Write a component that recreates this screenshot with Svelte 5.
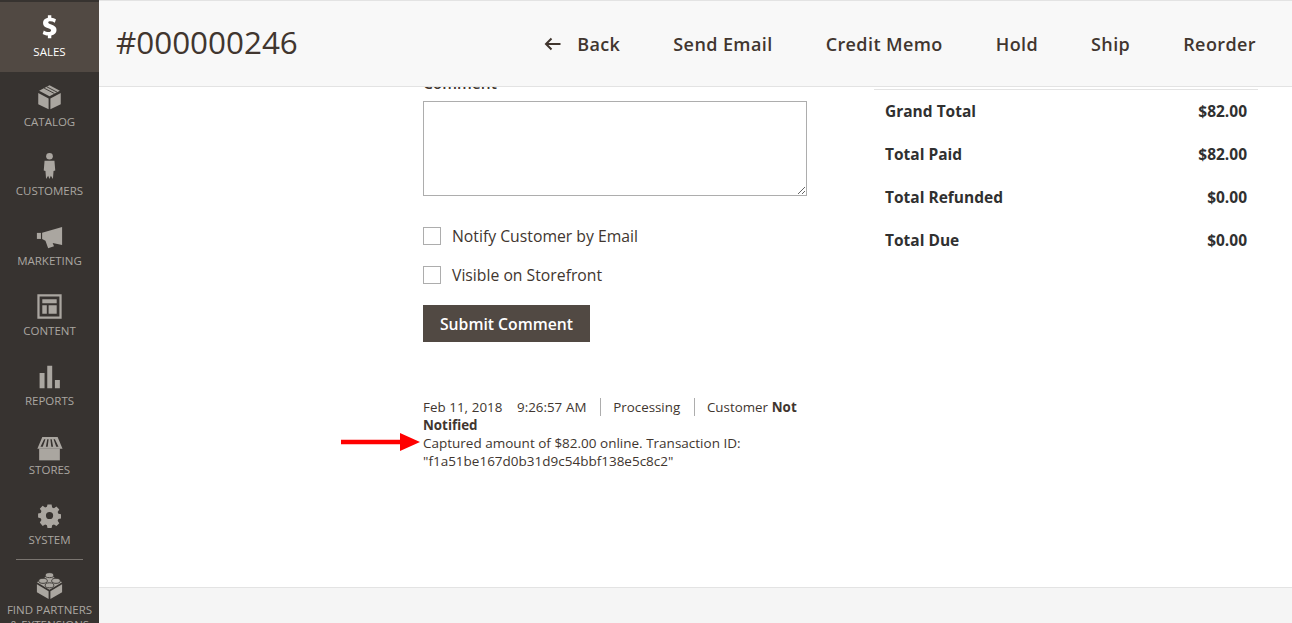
<script lang="ts">
  const navItems = [
    { id: 'sales', label: 'Sales', active: true },
    { id: 'catalog', label: 'Catalog' },
    { id: 'customers', label: 'Customers' },
    { id: 'marketing', label: 'Marketing' },
    { id: 'content', label: 'Content' },
    { id: 'reports', label: 'Reports' },
    { id: 'stores', label: 'Stores' },
    { id: 'system', label: 'System' },
  ];

  const actions = ['Send Email', 'Credit Memo', 'Hold', 'Ship', 'Reorder'];

  const totals = [
    { label: 'Grand Total', value: '$82.00' },
    { label: 'Total Paid', value: '$82.00' },
    { label: 'Total Refunded', value: '$0.00' },
    { label: 'Total Due', value: '$0.00' },
  ];
</script>

{#snippet navIcon(id: string)}
  <svg class="nav-icon" viewBox="0 0 30 30" aria-hidden="true">
    {#if id === 'sales'}
      <path d="M13.200 1.500h3.800v2.800c2 .2 3.700.7 5.200 1.500l-1.300 3.800c-1.600-.9-3.300-1.500-5-1.500-1.600 0-2.300.6-2.300 1.400 0 1 1 1.500 3.300 2.300 4 1.300 5.900 3 5.900 6.100 0 3.100-2.100 5.400-5.800 6V27h-3.800v-3c-2.200-.1-4.400-.8-5.800-1.800l1.300-3.900c1.600 1 3.500 1.800 5.400 1.800 1.700 0 2.700-.7 2.700-1.700 0-1.100-1-1.700-3.200-2.500-3.400-1.100-5.800-2.700-5.800-6 0-2.900 2-5.100 5.400-5.700z" />
    {:else if id === 'catalog'}
      <path d="M15 1.500l11.500 6-11.500 6-11.500-6z" />
      <path class="cut" d="M9 4.600l11.500 6M12 3.100l11.500 6" />
      <path d="M2.500 10l11.500 6v12L2.500 22.500zM27.500 10v12.500L16 28V16z" />
    {:else if id === 'customers'}
      <circle cx="15" cy="3.600" r="3.700" />
      <path d="M9.500 8.500h11l.9 11-1.900.6-.7 8.900-2.300-3.700-1.500 3.700-1.500-3.700-2.300 3.700-.7-8.900-1.900-.6z" />
    {:else if id === 'marketing'}
      <path d="M1 11h4.500v6.700H1z" />
      <path d="M6.800 10.700L29 4.500v20l-10.500-2.200 1.500 3.400-6.500 2.300-3-8.200-3.700-2z" />
    {:else if id === 'content'}
      <path fill-rule="evenodd" d="M1.500 1.500h27v27h-27zM4 4v22h22V4zM7 7h16v4.500H7zM7 13.500h5V23H7zM14 13.500h9V23h-9z" />
    {:else if id === 'reports'}
      <path d="M4 11h5.500v17H4zM12.500 3h5.500v25h-5.500zM21 19h5.500v9H21z" />
    {:else if id === 'stores'}
      <path fill-rule="evenodd" d="M7 5.500h17l5.500 13H1.500zM9 8L5 16.500h2.500L10.500 8zM12.500 8l-1.500 8.500h2L14 8zM16 8l1 8.500h2L17.500 8zM19.500 8l3 8.500H25L21 8z" />
      <path d="M3.500 18.500h23v13h-23z" />
    {:else if id === 'system'}
      <path transform="translate(1.400 1) scale(.91)" fill-rule="evenodd" d="M12.500 2h5l.7 3.600 2.200.9 3-2 3.500 3.500-2 3 .9 2.200 3.200.7v5l-3.200.7-.9 2.200 2 3-3.500 3.500-3-2-2.200.9-.7 3.300h-5l-.7-3.300-2.200-.9-3 2L3.100 23.800l2-3-.9-2.200L1 17.900v-5l3.200-.7.9-2.200-2-3 3.500-3.500 3 2 2.200-.9zM15 11a4.400 4.400 0 1 0 0 8.800 4.400 4.400 0 0 0 0-8.800z" />
    {:else if id === 'partners'}
      <path d="M15 3L29 11.500 15 19.800 1 11.500z" />
      <ellipse class="stud" cx="15" cy="3.500" rx="4.800" ry="2.800" />
      <ellipse class="stud" cx="7.800" cy="9.800" rx="4.800" ry="2.800" />
      <ellipse class="stud" cx="22.200" cy="9.800" rx="4.800" ry="2.800" />
      <ellipse class="stud" cx="15" cy="14.800" rx="4.800" ry="2.800" />
      <path d="M1 13.500l13 7.800V30L1 22.500zM29 13.500V22.500L16 30v-8.700z" />
    {/if}
  </svg>
{/snippet}

<div class="admin">
  <nav class="sidebar">
    {#each navItems as item}
      <div class="nav-item" class:active={item.active}>
        {@render navIcon(item.id)}
        <span>{item.label}</span>
      </div>
    {/each}
    <div class="nav-rule"></div>
    <div class="nav-item partners">
      {@render navIcon('partners')}
      <span>Find Partners &amp; Extensions</span>
    </div>
  </nav>

  <div class="main">
    <header class="page-header">
      <h1>#000000246</h1>
      <div class="actions">
        <button class="action back">
          <svg viewBox="0 0 18 14" aria-hidden="true">
            <path d="M16.500 7H2M7.500 1.500L2 7l5.500 5.500" />
          </svg>
          Back
        </button>
        {#each actions as action}
          <button class="action">{action}</button>
        {/each}
      </div>
    </header>

    <div class="content">
      <section class="history">
        <div class="field-label">Comment</div>
        <textarea></textarea>
        <label class="check first"><input type="checkbox" /><span>Notify Customer by Email</span></label>
        <label class="check"><input type="checkbox" /><span>Visible on Storefront</span></label>
        <button class="submit">Submit Comment</button>

        <div class="log">
          <div class="log-meta">
            <span>Feb 11, 2018</span>
            <span class="time">9:26:57 AM</span>
            <span class="status">Processing</span>
            <span class="status">Customer <b>Not Notified</b></span>
          </div>
          <div class="log-note">
            <svg class="arrow" viewBox="0 0 80 18" aria-hidden="true">
              <path d="M0 6.800h59V0L79 9 59 18v-6.800H0z" />
            </svg>
            Captured amount of $82.00 online. Transaction ID: "f1a51be167d0b31d9c54bbf138e5c8c2"
          </div>
        </div>
      </section>

      <section class="totals">
        {#each totals as row}
          <div class="total-row">
            <span>{row.label}</span>
            <span>{row.value}</span>
          </div>
        {/each}
      </section>
    </div>

    <footer class="page-footer"></footer>
  </div>
</div>

<style>
  :global(body) {
    margin: 0;
    background: #fff;
  }

  .admin {
    display: flex;
    height: 623px;
    overflow: hidden;
    font-family: "Open Sans", sans-serif;
    color: #41362f;
  }

  .sidebar {
    flex: 0 0 99px;
    width: 99px;
    box-sizing: border-box;
    padding-top: 2px;
    background: #373330;
    overflow: hidden;
  }

  .nav-item {
    display: flex;
    flex-direction: column;
    align-items: center;
    height: 69.720px;
    box-sizing: border-box;
    padding-top: 12px;
    color: #aaa6a0;
    fill: #aaa6a0;
    font-size: 11.500px;
    line-height: 15px;
    text-transform: uppercase;
    text-align: center;
  }

  .nav-item span {
    margin-top: 3px;
  }

  .nav-item.active {
    background: #514943;
    color: #fff;
    fill: #fff;
  }

  .nav-icon {
    display: block;
    width: 27px;
    height: 27px;
    overflow: visible;
  }

  .cut {
    fill: none;
    stroke: #373330;
    stroke-width: 1;
  }

  .stud {
    stroke: #373330;
    stroke-width: 1;
  }

  .nav-rule {
    width: 67px;
    height: 1px;
    margin: -1px auto 0;
    background: #7a7570;
  }

  .partners {
    padding-top: 12px;
  }

  .partners span {
    max-width: 92px;
  }

  .main {
    flex: 1;
    min-width: 0;
    display: flex;
    flex-direction: column;
  }

  .page-header {
    flex: 0 0 87px;
    box-sizing: border-box;
    display: flex;
    align-items: center;
    justify-content: space-between;
    padding: 0 36px 3px 17px;
    background: #f8f8f8;
    border-top: 1px solid #e3e3e3;
    border-bottom: 1px solid #e3e3e3;
  }

  h1 {
    margin: 0;
    font-size: 31.400px;
    font-weight: 400;
    line-height: 40px;
    color: #41362f;
  }

  .actions {
    display: flex;
    gap: 53px;
    padding-top: 3px;
  }

  .action {
    display: flex;
    align-items: center;
    padding: 0;
    border: 0;
    background: none;
    font: 600 18px/24px "Open Sans", sans-serif;
    letter-spacing: 0.4px;
    color: #41362f;
  }

  .back svg {
    width: 18px;
    height: 14px;
    margin-right: 15px;
    fill: none;
    stroke: #41362f;
    stroke-width: 2;
  }

  .content {
    flex: 1;
    min-height: 0;
    display: flex;
    overflow: hidden;
    padding-left: 324px;
  }

  .history {
    width: 384px;
  }

  .field-label {
    margin-top: -14px;
    height: 28px;
    font-size: 15.500px;
    font-weight: 600;
    line-height: 20px;
  }

  textarea {
    display: block;
    box-sizing: border-box;
    width: 384px;
    height: 95px;
    margin: 0;
    border: 1px solid #adadad;
    border-radius: 0;
    background: #fff;
  }

  .check {
    display: flex;
    align-items: center;
    height: 18px;
    margin-top: 21px;
    font-size: 15.750px;
    line-height: 20px;
    color: #41362f;
  }

  .check.first {
    margin-top: 31px;
  }

  .check input {
    appearance: none;
    box-sizing: border-box;
    width: 18px;
    height: 18px;
    margin: 0 11px 0 0;
    border: 1px solid #adadad;
    background: #fff;
  }

  .submit {
    display: block;
    width: 167px;
    height: 37px;
    margin-top: 21px;
    padding: 0;
    border: 0;
    background: #514943;
    color: #fff;
    font: 600 15.750px/20px "Open Sans", sans-serif;
  }

  .log {
    margin-top: 56px;
    font-size: 13.500px;
    line-height: 18px;
    color: #41362f;
  }

  .log-meta {
    font-size: 13.350px;
    word-spacing: 0.300px;
  }

  .time {
    margin-left: 11px;
  }

  /* divider sits on the left edge of each status part */
  .status {
    margin-left: 10px;
    padding-left: 12px;
    border-left: 1px solid #adadad;
  }

  .log-note {
    position: relative;
  }

  .arrow {
    position: absolute;
    left: -82px;
    top: -1px;
    width: 80px;
    height: 18px;
    fill: #f00;
  }

  .totals {
    width: 384px;
    height: 200px;
    box-sizing: border-box;
    margin-left: 67px;
    margin-top: 2px;
    padding: 0 11px;
    border-top: 1px solid #e3e3e3;
  }

  .total-row {
    display: flex;
    justify-content: space-between;
    align-items: center;
    height: 43px;
    box-sizing: border-box;
    padding-bottom: 2px;
    font-size: 15.500px;
    font-weight: 700;
    color: #303030;
  }

  .page-footer {
    flex: 0 0 36px;
    box-sizing: border-box;
    background: #f5f5f5;
    border-top: 1px solid #e3e3e3;
  }
</style>
